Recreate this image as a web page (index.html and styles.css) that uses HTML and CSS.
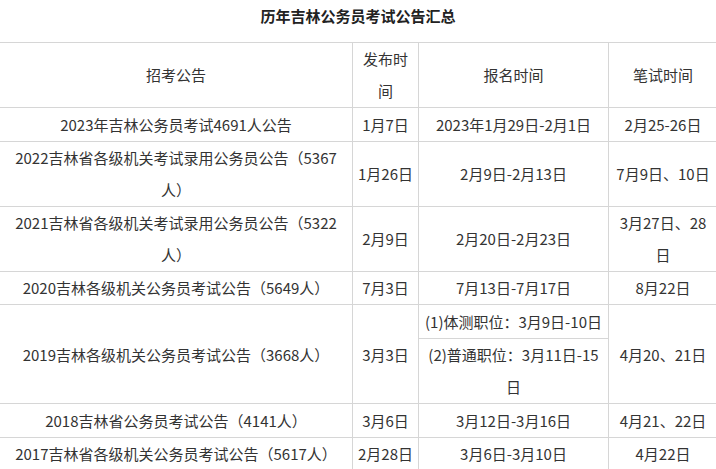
FILE: index.html
```html
<!DOCTYPE html>
<html lang="zh-CN">
<head>
<meta charset="utf-8">
<title>历年吉林公务员考试公告汇总</title>
<link rel="stylesheet" href="styles.css">
</head>
<body>
<div class="page">
  <h1 class="title">历年吉林公务员考试公告汇总</h1>
  <table class="exam-table">
    <colgroup>
      <col class="c1">
      <col class="c2">
      <col class="c3">
      <col class="c4">
    </colgroup>
    <tr>
      <td>招考公告</td>
      <td>发布时间</td>
      <td>报名时间</td>
      <td>笔试时间</td>
    </tr>
    <tr class="single">
      <td>2023年吉林公务员考试4691人公告</td>
      <td>1月7日</td>
      <td>2023年1月29日-2月1日</td>
      <td>2月25-26日</td>
    </tr>
    <tr>
      <td>2022吉林省各级机关考试录用公务员公告（5367人）</td>
      <td>1月26日</td>
      <td>2月9日-2月13日</td>
      <td>7月9日、10日</td>
    </tr>
    <tr>
      <td>2021吉林省各级机关考试录用公务员公告（5322人）</td>
      <td>2月9日</td>
      <td>2月20日-2月23日</td>
      <td>3月27日、28日</td>
    </tr>
    <tr>
      <td>2020吉林各级机关公务员考试公告（5649人）</td>
      <td>7月3日</td>
      <td>7月13日-7月17日</td>
      <td>8月22日</td>
    </tr>
    <tr class="single">
      <td rowspan="2">2019吉林各级机关公务员考试公告（3668人）</td>
      <td rowspan="2">3月3日</td>
      <td>(1)体测职位：3月9日-10日</td>
      <td rowspan="2">4月20、21日</td>
    </tr>
    <tr>
      <td>(2)普通职位：3月11日-15日</td>
    </tr>
    <tr class="single">
      <td>2018吉林省公务员考试公告（4141人）</td>
      <td>3月6日</td>
      <td>3月12日-3月16日</td>
      <td>4月21、22日</td>
    </tr>
    <tr>
      <td>2017吉林省各级机关公务员考试公告（5617人）</td>
      <td>2月28日</td>
      <td>3月6日-3月10日</td>
      <td>4月22日</td>
    </tr>
  </table>
</div>
</body>
</html>
```

FILE: styles.css
```css
html, body {
  margin: 0;
  padding: 0;
  background: #ffffff;
}

body {
  font-family: "Noto Sans CJK SC", "Microsoft YaHei", "Noto Sans", sans-serif;
  color: #333333;
  overflow: hidden;
}

.page {
  width: 716px;
  overflow: hidden;
}

.title {
  margin: 0;
  padding: 4px 0 14px;
  font-size: 15px;
  line-height: 24px;
  font-weight: bold;
  color: #222222;
  text-align: center;
}

.exam-table {
  border-collapse: collapse;
  table-layout: fixed;
  width: 718px;
  margin-left: -1px;
  font-size: 15px;
  line-height: 32px;
}

.c1 { width: 353px; }
.c2 { width: 66px; }
.c3 { width: 190px; }
.c4 { width: 109px; }

.exam-table td {
  border: 1px solid #d6d6d6;
  padding: 0 5px;
  text-align: center;
  vertical-align: middle;
  word-break: break-all;
}

.exam-table tr.single td {
  padding-top: 1px;
}
```
